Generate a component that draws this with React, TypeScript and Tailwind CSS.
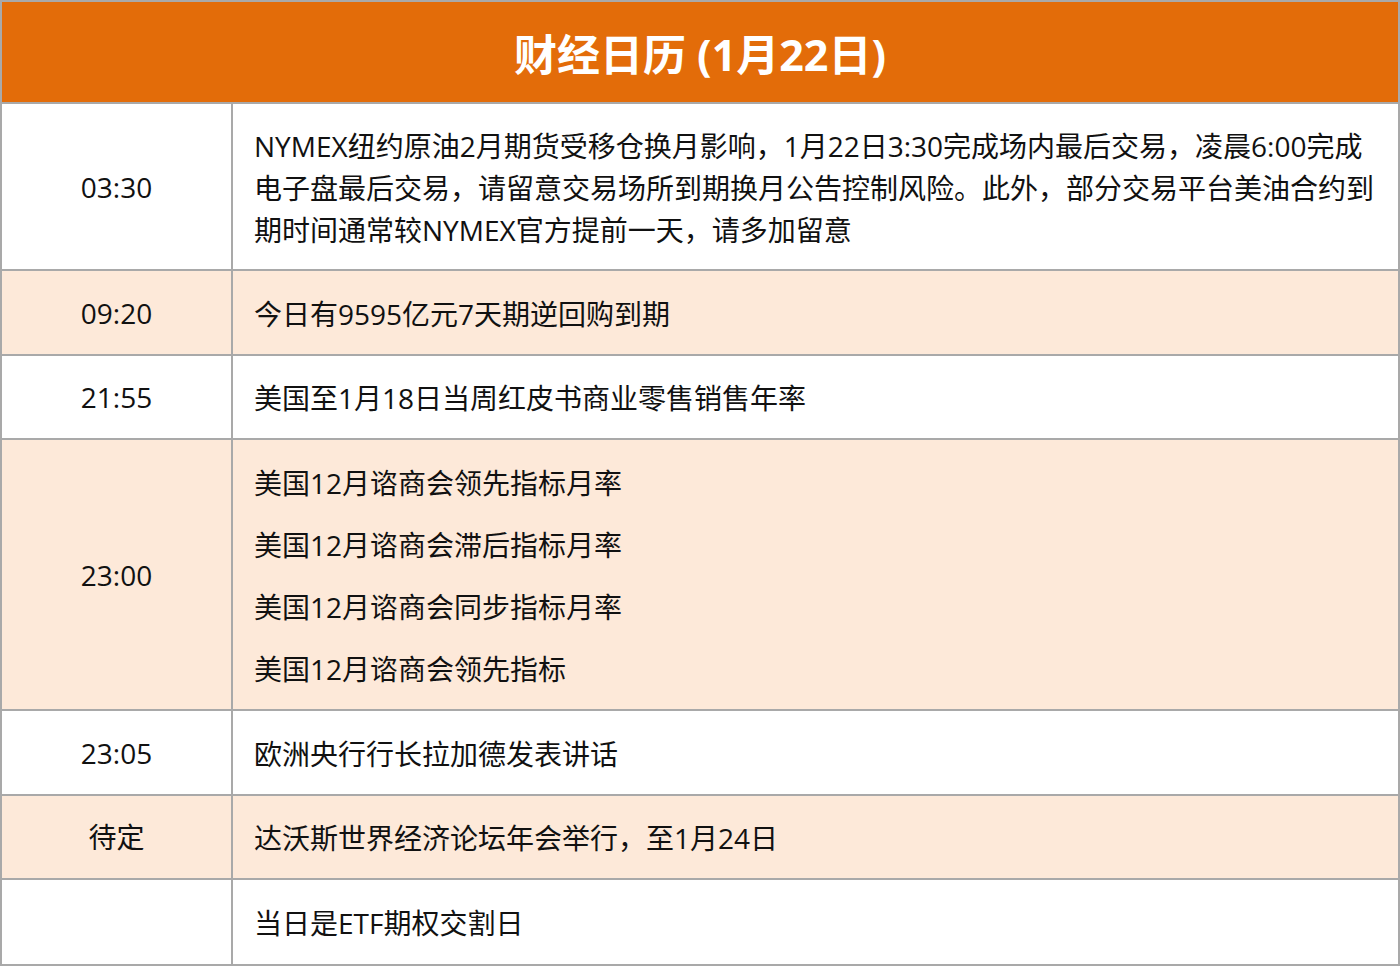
import React from "react";

const font = { fontFamily: '"Open Sans", "Noto Sans CJK SC", sans-serif' };

type Row = { time: string; lines: string[]; h: string; bg: string; gap?: boolean; last?: boolean };

const rows: Row[] = [
  {
    time: "03:30",
    lines: [
      "NYMEX纽约原油2月期货受移仓换月影响，1月22日3:30完成场内最后交易，凌晨6:00完成",
      "电子盘最后交易，请留意交易场所到期换月公告控制风险。此外，部分交易平台美油合约到",
      "期时间通常较NYMEX官方提前一天，请多加留意",
    ],
    h: "h-[167px]",
    bg: "bg-white",
  },
  { time: "09:20", lines: ["今日有9595亿元7天期逆回购到期"], h: "h-[85px]", bg: "bg-[#fde9d9]" },
  { time: "21:55", lines: ["美国至1月18日当周红皮书商业零售销售年率"], h: "h-[84px]", bg: "bg-white" },
  {
    time: "23:00",
    lines: ["美国12月谘商会领先指标月率", "美国12月谘商会滞后指标月率", "美国12月谘商会同步指标月率", "美国12月谘商会领先指标"],
    h: "h-[271px]",
    bg: "bg-[#fde9d9]",
    gap: true,
  },
  { time: "23:05", lines: ["欧洲央行行长拉加德发表讲话"], h: "h-[85px]", bg: "bg-white" },
  { time: "待定", lines: ["达沃斯世界经济论坛年会举行，至1月24日"], h: "h-[84px]", bg: "bg-[#fde9d9]" },
  { time: "", lines: ["当日是ETF期权交割日"], h: "h-[84px]", bg: "bg-white", last: true },
];

export default function App() {
  return (
    <div className="w-[1400px] h-[966px] bg-white" style={font}>
      <div className="w-[1400px] border-2 border-[#a9a9a9]">
        <div className="h-[102px] border-b-2 border-[#a9a9a9] bg-[#e36c09] flex items-center justify-center">
          <span className="text-white font-bold text-[43px] leading-none pt-[4px]">财经日历 (1月22日)</span>
        </div>
        {rows.map((r, i) => (
          <div
            key={i}
            className={`flex ${r.h} ${r.bg} ${r.last ? "" : "border-b-2 border-[#a9a9a9]"}`}
          >
            <div className="w-[231px] shrink-0 border-r-2 border-[#a9a9a9] flex items-center justify-center text-[28px] leading-[42px] text-[#111]">
              {r.time}
            </div>
            <div className={`flex-1 flex flex-col justify-center pl-[21px] pt-[2px] text-[28px] leading-[42px] text-[#111] ${r.gap ? "gap-[20px]" : ""}`}>
              {r.lines.map((l, j) => (
                <div key={j} className="whitespace-nowrap">
                  {l}
                </div>
              ))}
            </div>
          </div>
        ))}
      </div>
    </div>
  );
}
